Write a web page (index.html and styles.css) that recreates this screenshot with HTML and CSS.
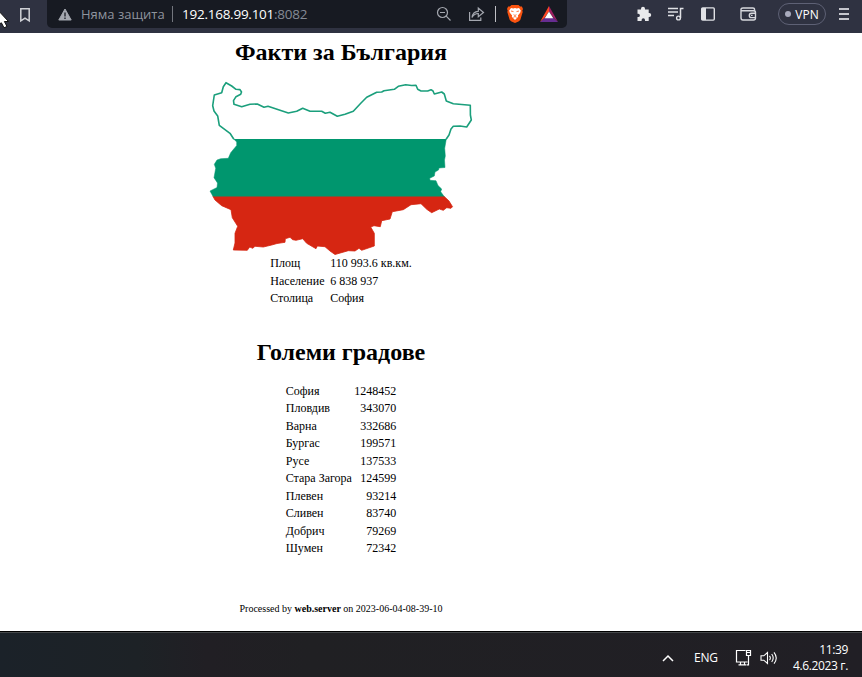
FILE: index.html
```
<!DOCTYPE html>
<html lang="bg">
<head>
<meta charset="utf-8">
<title>Факти за България</title>
<link rel="stylesheet" href="styles.css">
</head>
<body>
<header class="toolbar">
  <svg class="bookmark" width="12" height="16" viewBox="0 0 12 16"><path d="M1.8 1.8h8.4v12L6 11.2l-4.2 2.6z" fill="none" stroke="#d0d1d6" stroke-width="1.5"/></svg>
  <div class="address">
    <svg class="warning" width="14" height="13" viewBox="0 0 14 13"><path d="M7 1 13.2 12H.8z" fill="#a4a7af" stroke="#a4a7af" stroke-linejoin="round"/><path d="M7 4.5v4M7 9.6v1.3" stroke="#171a22" stroke-width="1.3"/></svg>
    <span class="insecure">Няма защита</span>
    <span class="divider"></span>
    <span class="url">192.168.99.101<span class="port">:8082</span></span>
    <span class="actions">
      <svg width="16" height="16" viewBox="0 0 16 16" fill="none" stroke="#a4a7af" stroke-width="1.2"><circle cx="6.5" cy="6.5" r="5"/><path d="m10.2 10.2 4.3 4.3M4 6.5h5"/></svg>
      <svg class="share" width="17" height="16" viewBox="0 0 17 16" fill="none" stroke="#a4a7af" stroke-width="1.2"><path d="M1.6 6v8.4h11.2v-3M4 11.5C4.5 7.5 7 5.5 10.3 5.3V2l5.2 4.5-5.2 4.2V7.5C7.8 7.4 5.6 8.8 4 11.5z"/></svg>
      <span class="divider light"></span>
      <svg class="lion" width="16" height="18" viewBox="0 0 16 18"><path d="M4.5 0h7l1.7 1.6 1.7-.2L16 4l-.7 1.4.4 1.5-2.2 7.4c-.3 1-1.2 1.6-2 2.1L8 18l-3.500-1.600c-.8-.5-1.700-1.100-2-2.100L.3 6.900l.4-1.500L0 4l1.100-2.600 1.700.2z" fill="#fb5410"/><path d="m4 3 2.300.5L8 3l1.700.5L12 3l1.800 2.500-.6 2.300-2.300 2.600.3 1.300L8 15l-3.200-3.300.3-1.300-2.300-2.600-.6-2.300z" fill="#fff"/><path d="m4 6 2.500.6M12 6l-2.500.6M6.600 9.700 8 10.500l1.400-.8M6.400 12.300 8 11.500l1.600.8" fill="none" stroke="#fb5410" stroke-width=".8"/></svg>
      <svg class="bat" width="18" height="16" viewBox="0 0 18 16"><path d="M9 0v5.500L4.500 12 0 16z" fill="#ff4724"/><path d="M9 0v5.500l4.500 6.500 4.500 4z" fill="#9e1f63"/><path d="m0 16 4.500-4h9l4.500 4z" fill="#662d91"/><path d="m9 5.500 4.300 6.700H4.700z" fill="#fff"/></svg>
    </span>
  </div>
  <div class="tools">
    <svg class="puzzle" width="16" height="16" viewBox="0 0 16 16"><path d="M1.500 3.500H5V2.700a2 2 0 0 1 4 0v.8h3.700V7h.5a2 2 0 0 1 0 4h-.5v4H9v-1a1.700 1.700 0 0 0-3.400 0v1H1.500v-4h.8a1.600 1.600 0 0 0 0-3.200h-.8z" fill="#e9eaec"/></svg>
    <svg class="media" width="17" height="14" viewBox="0 0 17 14"><path d="M1 1.500h10M1 5h10M1 8.500h6M13.500 11V1.500h3" fill="none" stroke="#e0e1e5" stroke-width="1.500"/><circle cx="11.500" cy="11" r="1.900" fill="none" stroke="#e0e1e5" stroke-width="1.400"/></svg>
    <svg class="side" width="14" height="14" viewBox="0 0 14 14"><rect x=".7" y=".9" width="12.600" height="12.200" rx="1" fill="none" stroke="#e0e1e5" stroke-width="1.400"/><path d="M1 1h4v12H1z" fill="#e0e1e5"/></svg>
    <svg class="wallet" width="17" height="14" viewBox="0 0 17 14" fill="none" stroke="#d6d7dc" stroke-width="1.400"><path d="M14.500 4V2.300Q14.500 1 13 1H3Q1 1 1 2.500v8.300Q1 13 3 13h10.500q2 0 2-2V5.500q0-1.700-2-1.700H1.500M15.500 6.200h-4a2.200 2.200 0 0 0 0 4.400h4"/><path d="M11 8.400h1.600"/></svg>
    <span class="vpn"><i></i>VPN</span>
    <span class="menu"><i></i><i></i><i></i></span>
  </div>
  <svg class="cursor" width="11" height="25" viewBox="0 0 11 25"><path d="M-4 4 8.500 17.500H4.400L7 22.500l-3 1.300-2.600-5L-4 22z" fill="#fff" stroke="#111"/></svg>
</header>
<main class="page">
  <h1>Факти за България</h1>
  <svg class="map" width="264" height="176" viewBox="209 80 264 176">
    <defs>
      <path id="outline" d="M226 82.700 231.700 86 236 89.300 240 89.600 241.500 92 240.700 94.300 236 96.700 233.500 100.700 234 104.300 241.700 106.700 250 104.200 257.300 104 264 107.300 268 106.300 288.300 113 296.700 111.300 302.700 108.300 310 111.300 321.700 111.300 325.300 113.300 330 112.300 337.300 116.300 345 114.300 353.300 111.300 361 103 366.700 97.300 376.700 92.300 381.700 92 384 90.800 394.300 89.300 398.300 86.300 405.700 84.700 411.700 85.500 416 85.300 417.700 89.300 421 91 427.700 91 431 89.700 433 91 434.300 94 441.700 92 444.300 94 446.300 101 453.300 103.700 470.300 105.300 470.400 115 471.300 120 466.700 127 460 126 453.300 126.300 451 129 449 135 446.300 139 444.700 148.300 445.300 156 444.500 160 445 167.500 439 168 438.500 170 435 172 434.300 176 429.700 178.300 430 180.300 436 180.700 438 185.500 441.700 189 440.700 191.700 444 196.300 449 201 452.500 206.700 451 208.300 446.700 207.700 443.300 210.300 439.300 209 431.700 212.700 427 209.500 421 203.700 411 204.700 403.300 209.700 392.300 211.700 390 219 381.700 220.700 380.300 226.700 374 225.700 370.700 227 374.300 233.300 374.300 246 361.700 250.300 359 248.300 355 251 348.300 250.700 335 254.500 330 251 325 246.700 317.300 246 316 248.700 306.700 243.300 302.700 238.700 296 240.300 292.700 239.700 290 237.300 285.300 238.700 285 242.300 277 243.500 271.700 245 263.300 247 255 246.300 252.700 248.300 249.700 247 247.300 250.300 233.300 250 235 243 235 233.300 237.700 226.300 232.300 217.700 231 209.700 221.700 205.700 215 200 210 191 217 187.500 217.500 183 214 177.700 215.700 168.300 214.300 164.300 217 160 220.700 158.700 228.300 158.300 230.700 152.700 236.700 145.500 236.700 142 233.700 139 230 133.300 219.300 125.300 217.700 116 214 111 212.700 105.700 214.300 95 221.700 92.700 223.300 86.700Z"/>
      <clipPath id="top"><path d="M209 80h264v59.500H209z"/></clipPath>
      <clipPath id="middle"><path d="M209 139h264v58H209z"/></clipPath>
      <clipPath id="bottom"><path d="M209 196.500h264V256H209z"/></clipPath>
    </defs>
    <use href="#outline" clip-path="url(#middle)" fill="#00966e" stroke="#00966e" stroke-width=".5"/>
    <use href="#outline" clip-path="url(#bottom)" fill="#d62612" stroke="#d62612" stroke-width=".8"/>
    <use href="#outline" clip-path="url(#top)" fill="none" stroke="#1b9f7c" stroke-width="1.600" stroke-linejoin="round"/>
  </svg>
  <table class="facts">
    <tr><td>Площ</td><td>110 993.6 кв.км.</td></tr>
    <tr><td>Население</td><td>6 838 937</td></tr>
    <tr><td>Столица</td><td>София</td></tr>
  </table>
  <h1 class="cities-title">Големи градове</h1>
  <table class="cities">
    <tr><td>София</td><td>1248452</td></tr>
    <tr><td>Пловдив</td><td>343070</td></tr>
    <tr><td>Варна</td><td>332686</td></tr>
    <tr><td>Бургас</td><td>199571</td></tr>
    <tr><td>Русе</td><td>137533</td></tr>
    <tr><td>Стара Загора</td><td>124599</td></tr>
    <tr><td>Плевен</td><td>93214</td></tr>
    <tr><td>Сливен</td><td>83740</td></tr>
    <tr><td>Добрич</td><td>79269</td></tr>
    <tr><td>Шумен</td><td>72342</td></tr>
  </table>
  <p class="processed">Processed by <b>web.server</b> on 2023-06-04-08-39-10</p>
</main>
<footer class="taskbar">
  <svg class="chevron" width="12" height="8" viewBox="0 0 12 8"><path d="m1 7 5-5 5 5" fill="none" stroke="#fff" stroke-width="1.500"/></svg>
  <span class="lang">ENG</span>
  <svg class="network" width="17" height="17" viewBox="0 0 17 17" fill="none" stroke="#fff" stroke-width="1.200"><path d="M10.500 1.500h-9v11.500h11M3.500 15.800h8M5.500 13v3M9.500 13v3M11.500 1.500h4v5h-4zM13.500 6.500v9.300H12M12 3.500h3"/></svg>
  <svg class="sound" width="18" height="14" viewBox="0 0 18 14" fill="none" stroke="#fff" stroke-width="1.100"><path d="M1 4.800h2.800L7.500 1.500v11L3.800 9.200H1zM9.500 4.800q1.700 2.200 0 4.400M11.700 3q3 4 0 8M14 1.300q4.500 5.700 0 11.400"/></svg>
  <div class="clock"><span>11:39</span><span>4.6.2023 г.</span></div>
</footer>
</body>
</html>
```
FILE: styles.css
```
* { box-sizing: border-box; }
body { margin: 0; width: 862px; height: 677px; overflow: hidden; display: flex; flex-direction: column; background: #fff; color: #000; }
svg { display: block; flex: none; }

.toolbar { position: relative; flex: none; height: 33px; display: flex; align-items: flex-start; background: #2f3241; font-family: "Open Sans", "Noto Sans", sans-serif; }
.bookmark { margin: 7px 0 0 19px; }
.address { width: 520px; height: 28px; margin-left: 16px; padding-left: 11px; display: flex; align-items: center; background: #171a22; border-radius: 0 0 5px 5px; font-size: 14px; white-space: nowrap; }
.insecure { width: 84px; margin-left: 9px; color: #8f949e; font-size: 13px; }
.divider { width: 1px; height: 16px; margin-left: 7px; background: #73767e; }
.url { width: 130px; margin-left: 9px; color: #fff; font-size: 13.5px; letter-spacing: -.25px; }
.port { color: #858a95; }
.actions { display: flex; align-items: center; margin-left: 124px; }
.share { margin-left: 16px; }
.light { margin-left: 10px; background: #bfc0c5; }
.lion { margin-left: 11px; }
.bat { margin-left: 17px; }
.tools { height: 28px; margin-left: 69px; display: flex; align-items: center; }
.media { margin-left: 15px; }
.side { margin-left: 17px; }
.wallet { margin-left: 25px; }
.vpn { width: 48px; height: 22px; margin-left: 21px; display: flex; align-items: center; justify-content: center; gap: 4px; border: 1px solid #5e6175; border-radius: 11px; color: #fff; font-size: 12px; }
.vpn i { width: 6px; height: 6px; border-radius: 50%; background: #a9abbd; }
.menu { width: 10px; margin-left: 13px; display: flex; flex-direction: column; gap: 3px; }
.menu i { height: 2px; background: #c5c6cd; }
.cursor { position: absolute; left: 0; top: 4px; }

.page { width: 682px; height: 598px; flex: none; display: flex; flex-direction: column; align-items: center; font: 12px/14px "Liberation Serif", serif; }
h1 { margin: 5px 0 0; font-size: 24px; line-height: 28px; }
.map { margin-top: 14px; }
table { display: block; }
tbody { display: grid; grid-auto-rows: 17.5px; }
tr { display: flex; align-items: center; }
td { padding: 0; white-space: nowrap; }
.facts { width: 141.5px; margin-top: -1.5px; }
.facts td:first-child { width: 60px; }
.cities-title { margin-top: 31px; }
.cities { width: 110.5px; margin-top: 16.1px; }
.cities tr { justify-content: space-between; }
.processed { margin: 45.9px 0 0; font-size: 10px; line-height: 12px; }

.taskbar { flex: none; height: 46px; display: flex; align-items: center; padding: 6px 14px 0 662px; border-top: 1px solid #000; background: linear-gradient(90deg, #1b2229, #1d2226 16%, #211f24 24%, #202023 36%, #211f25); box-shadow: inset 0 1px #45484a; color: #fff; font-family: "Open Sans", "Noto Sans", sans-serif; }
.lang { width: 24px; margin-left: 20px; font-size: 12px; letter-spacing: -.2px; }
.network { margin-left: 17px; }
.sound { margin-left: 8px; }
.clock { margin-left: auto; display: flex; flex-direction: column; align-items: flex-end; font-size: 12px; line-height: 16px; letter-spacing: -.35px; }
```
